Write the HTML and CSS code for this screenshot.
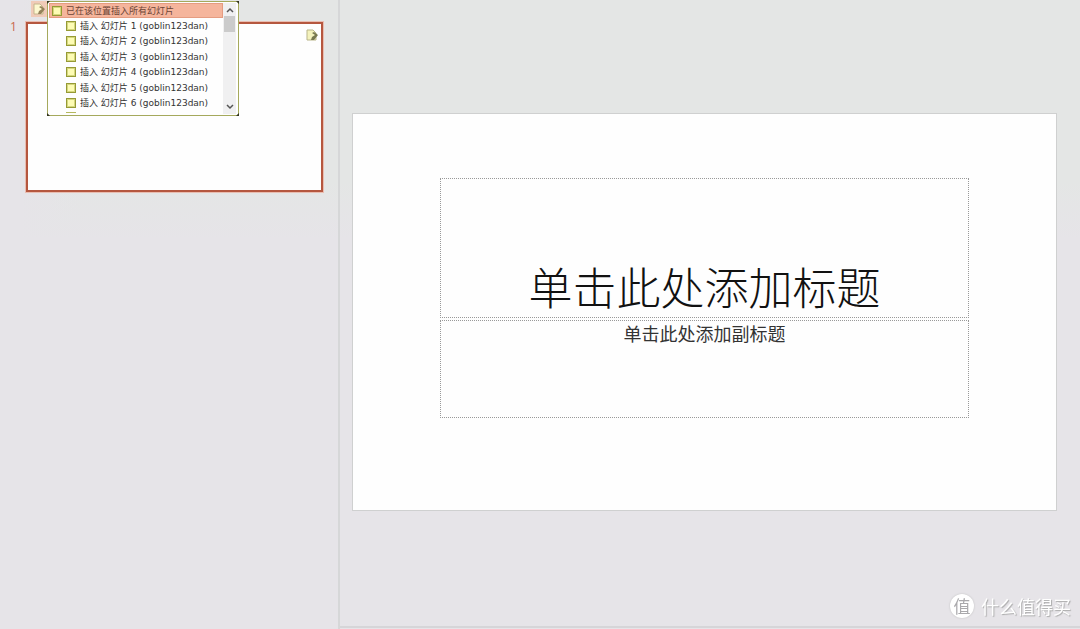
FILE: index.html
```html
<!DOCTYPE html>
<html lang="zh-CN">
<head>
  <meta charset="UTF-8">
  <meta name="viewport" content="width=device-width, initial-scale=1.0">
  <title>幻灯片</title>
  <link rel="stylesheet" href="styles.css">
</head>
<body>
  <div class="workspace">
    <aside class="slides">
      <span class="slide-number">1</span>
      <div class="thumb">
        <svg class="page-icon" viewBox="0 0 12 12">
          <path d="M1 1h6l3 3v7H1z" fill="#f4f2bc" stroke="#b9b58a"/>
          <path d="M5 11l1-3 3-2-3-2 2-1 4 3-4 5z" fill="#77784f"/>
        </svg>
      </div>
      <button class="paste-btn" aria-label="插入选项">
        <svg class="page-icon" viewBox="0 0 12 12">
          <path d="M1 1h6l3 3v7H1z" fill="#fdf8d0" stroke="#c6b58e"/>
          <path d="M5 11l1-3 3-2-3-2 2-1 4 3-4 5z" fill="#94825a"/>
        </svg>
      </button>
      <div class="menu">
        <div class="menu-content">
          <button class="menu-all"><i class="box"></i>已在该位置插入所有幻灯片</button>
          <div class="menu-list">
            <button class="menu-item"><i class="box"></i>插入 幻灯片 1 (goblin123dan)</button>
            <button class="menu-item"><i class="box"></i>插入 幻灯片 2 (goblin123dan)</button>
            <button class="menu-item"><i class="box"></i>插入 幻灯片 3 (goblin123dan)</button>
            <button class="menu-item"><i class="box"></i>插入 幻灯片 4 (goblin123dan)</button>
            <button class="menu-item"><i class="box"></i>插入 幻灯片 5 (goblin123dan)</button>
            <button class="menu-item"><i class="box"></i>插入 幻灯片 6 (goblin123dan)</button>
          </div>
          <div class="menu-more"></div>
        </div>
        <div class="scrollbar">
          <svg class="arrow" viewBox="0 0 8 8"><path d="M1 6l3-3 3 3" fill="none" stroke="#555" stroke-width="1.5"/></svg>
          <div class="scroll-thumb"></div>
          <svg class="arrow" viewBox="0 0 8 8"><path d="M1 2l3 3 3-3" fill="none" stroke="#555" stroke-width="1.5"/></svg>
        </div>
        <i class="handle top-left"></i>
        <i class="handle top-right"></i>
        <i class="handle bottom-left"></i>
        <i class="handle bottom-right"></i>
      </div>
    </aside>
    <main class="editor">
      <div class="slide">
        <h1 class="title">单击此处添加标题</h1>
        <p class="subtitle">单击此处添加副标题</p>
      </div>
    </main>
  </div>
  <div class="watermark"><span class="watermark-logo">值</span>什么值得买</div>
</body>
</html>
```

FILE: styles.css
```css
* {
  box-sizing: border-box;
}
body {
  margin: 0;
  font-family: "Noto Sans CJK SC", sans-serif;
  background: linear-gradient(#e4e6e5 0, #e4e6e5 180px, #e6e4e8 240px) no-repeat #e6e4e8;
}
button {
  font: inherit;
  border: 0;
  padding: 0;
  margin: 0;
  background: none;
}
.workspace {
  display: flex;
  min-height: 100vh;
}

/* slide list */
.slides {
  position: relative;
  width: 340px;
  flex-shrink: 0;
  padding: 22px 15px 0 10px;
  display: flex;
  align-items: flex-start;
  border-right: 2px solid #d6d7d8;
  background: linear-gradient(90deg, #e6e4e8 0, #e6e4e8 20px, transparent 80px);
}
.slide-number {
  width: 16px;
  font-family: "Open Sans", sans-serif;
  font-size: 12px;
  line-height: 10px;
  color: #c8694e;
}
.thumb {
  flex: 1;
  height: 170px;
  padding: 5px 3px;
  display: flex;
  justify-content: flex-end;
  background: #fefefe;
  border: 2px solid #b5573f;
  box-shadow: 0 0 0 1px #e9bdb1;
}
.page-icon {
  display: block;
  width: 12px;
  height: 12px;
}
.paste-btn {
  position: absolute;
  left: 31px;
  top: 1px;
  width: 16px;
  height: 16px;
  padding: 2px;
  background: #f0cbb8;
}

/* insert menu */
.menu {
  position: absolute;
  left: 47px;
  top: 1px;
  width: 192px;
  height: 115px;
  padding: 1px 2px 1px 1px;
  display: flex;
  font-family: "DejaVu Sans", "Noto Sans CJK SC", sans-serif;
  font-size: 9px;
  color: #333;
  background: #fefefe;
  border: 1px solid #a5a95c;
  border-radius: 2px;
}
.menu-content {
  flex: 1;
  display: flex;
  flex-direction: column;
}
.menu-all, .menu-item {
  display: flex;
  align-items: center;
  gap: 4px;
  width: 100%;
  color: inherit;
  line-height: 12px;
  white-space: nowrap;
}
.menu-all {
  height: 15px;
  padding-left: 2px;
  color: #6b4436;
  background: #f5b59c;
  border: 1px solid #e59c81;
}
.menu-list {
  flex: 1;
  display: grid;
  grid-template-rows: repeat(6, 1fr);
  padding-left: 17px;
}
.box {
  width: 10px;
  height: 10px;
  flex-shrink: 0;
  background: #fdfcb4;
  border: 1px solid #969a35;
  box-shadow: inset 0 0 0 1px #d5d77c;
}
.menu-more {
  width: 10px;
  height: 1px;
  margin: 1px 0 1px 17px;
  background: #b5b85e;
}
.scrollbar {
  width: 13px;
  display: flex;
  flex-direction: column;
  align-items: center;
  padding: 3px 0;
  background: #f0f0f1;
}
.arrow {
  width: 8px;
  height: 8px;
}
.arrow:last-child {
  margin-top: auto;
}
.scroll-thumb {
  width: 11px;
  height: 16px;
  margin-top: 2px;
  background: #cbcbcb;
}
.handle {
  position: absolute;
  width: 3px;
  height: 3px;
  background: #33351f;
}
.top-left {
  left: -1px;
  top: -1px;
  clip-path: polygon(0 0, 100% 0, 0 100%);
}
.top-right {
  right: -1px;
  top: -1px;
  clip-path: polygon(0 0, 100% 0, 100% 100%);
}
.bottom-left {
  left: -1px;
  bottom: -1px;
  clip-path: polygon(0 0, 100% 100%, 0 100%);
}
.bottom-right {
  right: -1px;
  bottom: -1px;
  clip-path: polygon(100% 0, 100% 100%, 0 100%);
}

/* slide being edited */
.editor {
  flex: 1;
  margin-bottom: 1px;
  padding: 113px 23px 0 12px;
  border-bottom: 2px solid #d6d5d8;
}
.slide {
  display: flex;
  flex-direction: column;
  gap: 2px;
  aspect-ratio: 705 / 398;
  padding: 64px 87px 92px;
  background: #fefefe;
  border: 1px solid #cfd0d0;
}
.title, .subtitle {
  margin: 0;
  display: flex;
  justify-content: center;
  border: 1px dotted #999;
}
.title {
  flex: 10;
  align-items: flex-end;
  font-size: 44px;
  font-weight: 300;
  line-height: 62px;
  color: #111;
}
.subtitle {
  flex: 7;
  font-size: 18px;
  line-height: 24px;
  color: #333;
}

.watermark {
  position: fixed;
  right: 9px;
  bottom: 10px;
  display: flex;
  align-items: center;
  gap: 7px;
  font-size: 18px;
  line-height: 26px;
  color: #fff;
  text-shadow: 1px 1px 1px #aaa;
}
.watermark-logo {
  width: 24px;
  height: 24px;
  font-size: 17px;
  line-height: 24px;
  text-align: center;
  color: #aaa9ac;
  text-shadow: none;
  background: #fff;
  border-radius: 50%;
  box-shadow: 0 0 2px #bbb;
}
```
